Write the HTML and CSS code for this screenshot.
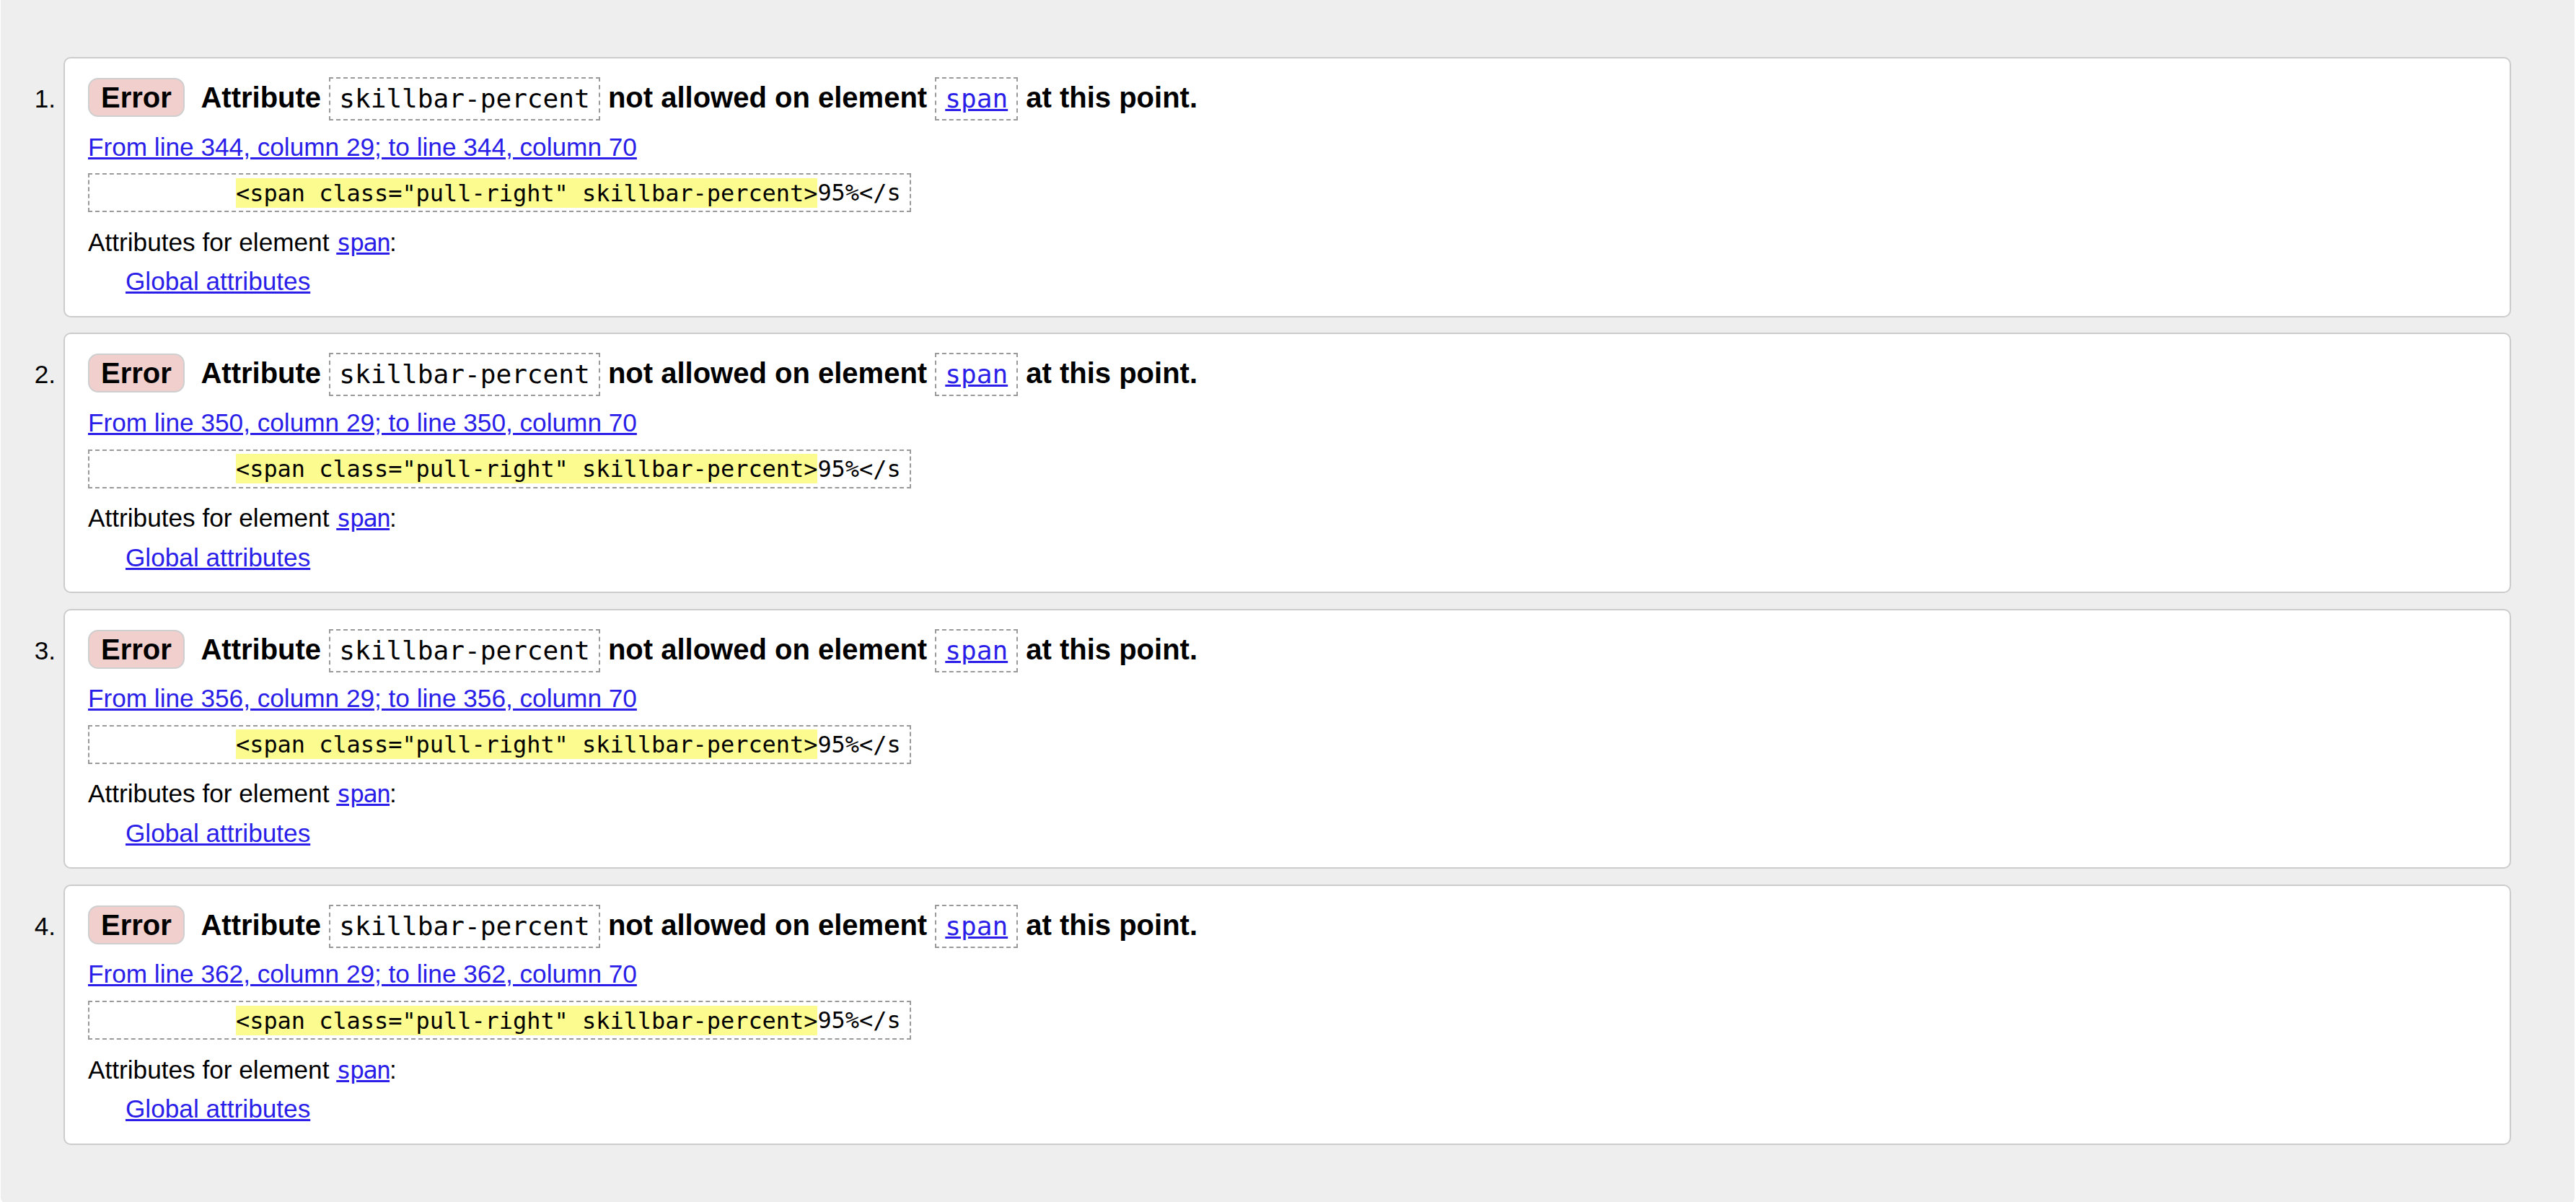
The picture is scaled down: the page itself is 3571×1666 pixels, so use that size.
FILE: index.html
```html
<!DOCTYPE html>
<html lang="en">
<head>
<meta charset="utf-8">
<title>Validation results</title>
<link rel="stylesheet" href="styles.css">
</head>
<body>
<div class="panel">
  <ol class="results">
    <li class="item">
      <span class="num">1.</span>
      <div class="card">
        <p class="msg"><strong class="badge">Error</strong> <span>Attribute <code class="tok">skillbar-percent</code> not allowed on element <code class="tok"><a href="#">span</a></code> at this point.</span></p>
        <p class="loc"><a href="#">From line 344, column 29; to line 344, column 70</a></p>
        <pre class="extract">          <mark>&lt;span class="pull-right" skillbar-percent&gt;</mark>95%&lt;/s</pre>
        <p class="attrs">Attributes for element <code class="ref"><a href="#">span</a></code>:</p>
        <p class="global"><a href="#">Global attributes</a></p>
      </div>
    </li>
    <li class="item">
      <span class="num">2.</span>
      <div class="card">
        <p class="msg"><strong class="badge">Error</strong> <span>Attribute <code class="tok">skillbar-percent</code> not allowed on element <code class="tok"><a href="#">span</a></code> at this point.</span></p>
        <p class="loc"><a href="#">From line 350, column 29; to line 350, column 70</a></p>
        <pre class="extract">          <mark>&lt;span class="pull-right" skillbar-percent&gt;</mark>95%&lt;/s</pre>
        <p class="attrs">Attributes for element <code class="ref"><a href="#">span</a></code>:</p>
        <p class="global"><a href="#">Global attributes</a></p>
      </div>
    </li>
    <li class="item">
      <span class="num">3.</span>
      <div class="card">
        <p class="msg"><strong class="badge">Error</strong> <span>Attribute <code class="tok">skillbar-percent</code> not allowed on element <code class="tok"><a href="#">span</a></code> at this point.</span></p>
        <p class="loc"><a href="#">From line 356, column 29; to line 356, column 70</a></p>
        <pre class="extract">          <mark>&lt;span class="pull-right" skillbar-percent&gt;</mark>95%&lt;/s</pre>
        <p class="attrs">Attributes for element <code class="ref"><a href="#">span</a></code>:</p>
        <p class="global"><a href="#">Global attributes</a></p>
      </div>
    </li>
    <li class="item">
      <span class="num">4.</span>
      <div class="card">
        <p class="msg"><strong class="badge">Error</strong> <span>Attribute <code class="tok">skillbar-percent</code> not allowed on element <code class="tok"><a href="#">span</a></code> at this point.</span></p>
        <p class="loc"><a href="#">From line 362, column 29; to line 362, column 70</a></p>
        <pre class="extract">          <mark>&lt;span class="pull-right" skillbar-percent&gt;</mark>95%&lt;/s</pre>
        <p class="attrs">Attributes for element <code class="ref"><a href="#">span</a></code>:</p>
        <p class="global"><a href="#">Global attributes</a></p>
      </div>
    </li>
  </ol>
</div>
</body>
</html>
```
FILE: styles.css
```css
html, body {
  margin: 0;
  padding: 0;
  background: #fff;
}
body {
  font-family: "Liberation Sans", Arial, sans-serif;
  font-size: 35.2px;
  color: #000;
}
.panel {
  background: #eeeeee;
  margin-left: 1px;
  width: 3568px;
  box-sizing: border-box;
  padding: 79px 0 82.5px 0;
  border-radius: 0 0 9px 9px;
}
.results {
  list-style: none;
  margin: 0;
  padding: 0;
  display: flex;
  flex-direction: column;
  gap: 21.5px;
}
.item {
  display: flex;
  align-items: baseline;
}
.num {
  flex: none;
  width: 76px;
  margin-right: 11px;
  text-align: right;
  line-height: 60px;
}
.card {
  flex: none;
  width: 3393px;
  box-sizing: border-box;
  background: #fff;
  border: 2px solid #ccc;
  border-radius: 10px;
  padding: 24px 0 21px 32px;
}
a {
  color: #2a1ee8;
}
.msg {
  margin: 0;
  font-size: 40px;
  font-weight: bold;
  line-height: 60px;
  white-space: nowrap;
}
.badge {
  display: inline-block;
  background: #f1cfcd;
  border: 2px solid #cfcfcf;
  border-radius: 14px;
  padding: 2px 16px;
  line-height: 46px;
  margin-right: 13px;
}
.tok {
  display: inline-block;
  font-family: "DejaVu Sans Mono", "Liberation Mono", monospace;
  font-weight: normal;
  font-size: 36.1px;
  line-height: 52px;
  padding: 2px 12px;
  border: 2px dashed #9a9a9a;
}
.loc {
  margin: 10.5px 0 0 0;
  line-height: 52.5px;
}
.extract {
  display: block;
  width: fit-content;
  margin: 10.25px 0 0 0;
  padding: 2px 12px 2px 11px;
  border: 2px dashed #9a9a9a;
  font-family: "DejaVu Sans Mono", "Liberation Mono", monospace;
  font-size: 31.9px;
  line-height: 46px;
  white-space: pre;
}
.extract mark {
  background: #fbfb8f;
  color: inherit;
  padding: 1.5px 0;
}
.attrs {
  margin: 15.5px 0 0 0;
  line-height: 52.5px;
}
.ref {
  font-family: "DejaVu Sans Mono", "Liberation Mono", monospace;
  font-size: 34px;
  letter-spacing: -2px;
  line-height: 1;
}
.global {
  margin: 2px 0 0 52px;
  line-height: 52.5px;
}
```
